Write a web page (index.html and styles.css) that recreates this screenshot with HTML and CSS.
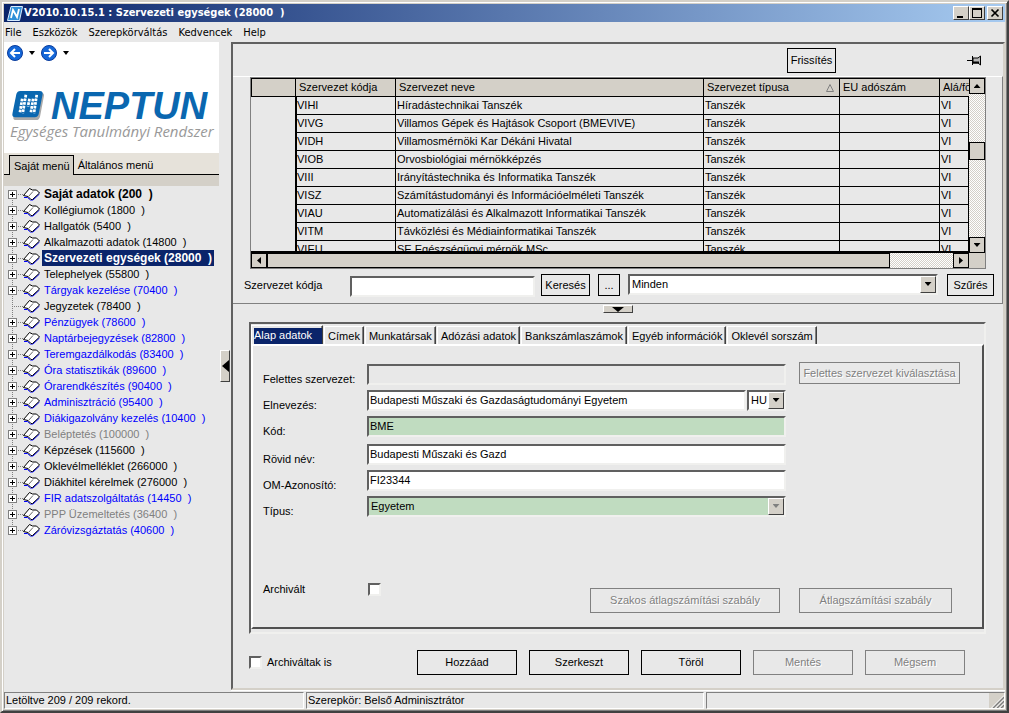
FILE: index.html
```html
<!DOCTYPE html>
<html lang="hu">
<head>
<meta charset="utf-8">
<title>V2010.10.15.1 : Szervezeti egységek (28000 )</title>
<link rel="stylesheet" href="styles.css">
</head>
<body>
<svg class="sprite" aria-hidden="true">
  <symbol id="book" viewBox="0 0 17 13">
    <path d="M1 9.500h3.500L7.500 12h2.500l6.500-6" fill="none" stroke="#0000ff"/>
    <path d="M.5 7.500L6.500 .5l3 1.500h4l3 3L9.500 11.500H8L5 8.500z" fill="#fff" stroke="#000"/>
    <path d="M10 3.500L5.500 8.500" fill="none" stroke="#666"/>
  </symbol>
  <symbol id="mark" viewBox="0 0 34 32">
    <path d="M9 3h22q3 0 2.500 3l-4 21q-1 4-4 4H5q-4 0-3-4L5 6q1-3 4-3z" fill="#aaa"/>
    <path d="M9 1h20q4 0 3 4l-4 20q-1 3-4 3H4q-4 0-3-4L5 4q1-3 4-3z" fill="#0a67b0"/>
    <g fill="none" stroke="#fff" stroke-width="2.800" stroke-dasharray="2.800 1">
      <path d="M11 9L8.500 24M14.800 5l-3.200 19M18.500 9l-1.500 8M22.300 9l-2.500 15M26 5l-2.800 19"/>
    </g>
  </symbol>
</svg>
<div class="window">
  <header class="titlebar">
    <svg class="app-icon" viewBox="0 0 16 15"><path d="M4 .5h11.500l-3 14H.5z" fill="#2f8fd8" stroke="#d8ecff"/><path d="M4 12L6 4l4 7 2-8" fill="none" stroke="#fff" stroke-width="1.800"/></svg>
    <h1>V2010.10.15.1 : Szervezeti egységek (28000  )</h1>
    <button aria-label="Kis méret"><svg viewBox="0 0 14 12"><path d="M3 9h6v2H3z"/></svg></button>
    <button aria-label="Teljes méret"><svg viewBox="0 0 14 12"><path d="M2 1h10v10H2zM3 3v7h8V3z" fill-rule="evenodd"/></svg></button>
    <button class="close" aria-label="Bezárás"><svg viewBox="0 0 14 12"><path d="M3.500 2.500l7 7m0-7l-7 7" stroke="#000" stroke-width="1.700"/></svg></button>
  </header>
  <nav class="menubar"><a href="#">File</a><a href="#">Eszközök</a><a href="#">Szerepkörváltás</a><a href="#">Kedvencek</a><a href="#">Help</a></nav>

  <div class="body">
    <aside class="side">
      <div class="brand">
        <div class="history">
          <button aria-label="Vissza"><svg viewBox="0 0 16 16"><circle cx="8" cy="8" r="7.500" fill="#1467d8" stroke="#0a3c9c"/><path d="M13 8H4m4-4L4 8l4 4" fill="none" stroke="#fff" stroke-width="2"/></svg></button>
          <i class="drop"></i>
          <button aria-label="Előre"><svg viewBox="0 0 16 16"><circle cx="8" cy="8" r="7.500" fill="#1467d8" stroke="#0a3c9c"/><path d="M3 8h9M8 4l4 4-4 4" fill="none" stroke="#fff" stroke-width="2"/></svg></button>
          <i class="drop"></i>
        </div>
        <div class="logo"><svg><use href="#mark"/></svg><strong>NEPTUN</strong></div>
        <p class="slogan">Egységes Tanulmányi Rendszer</p>
      </div>
      <div class="side-tabs"><button class="on">Saját menü</button><button>Általános menü</button></div>
      <ul class="tree">
        <li><button aria-label="Kibontás"></button><svg><use href="#book"/></svg><a href="#" class="bold">Saját adatok (200  )</a></li>
        <li><button aria-label="Kibontás"></button><svg><use href="#book"/></svg><a href="#">Kollégiumok (1800  )</a></li>
        <li><button aria-label="Kibontás"></button><svg><use href="#book"/></svg><a href="#">Hallgatók (5400  )</a></li>
        <li><button aria-label="Kibontás"></button><svg><use href="#book"/></svg><a href="#">Alkalmazotti adatok (14800  )</a></li>
        <li><button aria-label="Kibontás"></button><svg><use href="#book"/></svg><a href="#" class="bold selected">Szervezeti egységek (28000  )</a></li>
        <li><button aria-label="Kibontás"></button><svg><use href="#book"/></svg><a href="#">Telephelyek (55800  )</a></li>
        <li><button aria-label="Kibontás"></button><svg><use href="#book"/></svg><a href="#" class="blue">Tárgyak kezelése (70400  )</a></li>
        <li class="leaf"><svg><use href="#book"/></svg><a href="#">Jegyzetek (78400  )</a></li>
        <li><button aria-label="Kibontás"></button><svg><use href="#book"/></svg><a href="#" class="blue">Pénzügyek (78600  )</a></li>
        <li><button aria-label="Kibontás"></button><svg><use href="#book"/></svg><a href="#" class="blue">Naptárbejegyzések (82800  )</a></li>
        <li><button aria-label="Kibontás"></button><svg><use href="#book"/></svg><a href="#" class="blue">Teremgazdálkodás (83400  )</a></li>
        <li><button aria-label="Kibontás"></button><svg><use href="#book"/></svg><a href="#" class="blue">Óra statisztikák (89600  )</a></li>
        <li><button aria-label="Kibontás"></button><svg><use href="#book"/></svg><a href="#" class="blue">Órarendkészítés (90400  )</a></li>
        <li><button aria-label="Kibontás"></button><svg><use href="#book"/></svg><a href="#" class="blue">Adminisztráció (95400  )</a></li>
        <li><button aria-label="Kibontás"></button><svg><use href="#book"/></svg><a href="#" class="blue">Diákigazolvány kezelés (10400  )</a></li>
        <li><button aria-label="Kibontás"></button><svg><use href="#book"/></svg><a href="#" class="gray">Beléptetés (100000  )</a></li>
        <li><button aria-label="Kibontás"></button><svg><use href="#book"/></svg><a href="#">Képzések (115600  )</a></li>
        <li><button aria-label="Kibontás"></button><svg><use href="#book"/></svg><a href="#">Oklevélmelléklet (266000  )</a></li>
        <li><button aria-label="Kibontás"></button><svg><use href="#book"/></svg><a href="#">Diákhitel kérelmek (276000  )</a></li>
        <li><button aria-label="Kibontás"></button><svg><use href="#book"/></svg><a href="#" class="blue">FIR adatszolgáltatás (14450  )</a></li>
        <li><button aria-label="Kibontás"></button><svg><use href="#book"/></svg><a href="#" class="gray">PPP Üzemeltetés (36400  )</a></li>
        <li><button aria-label="Kibontás"></button><svg><use href="#book"/></svg><a href="#" class="blue">Záróvizsgáztatás (40600  )</a></li>
      </ul>
    </aside>
    <div class="split-v"><button aria-label="Menü elrejtése"><svg viewBox="0 0 7 12"><path d="M7 0v12L0 6z"/></svg></button></div>

    <main class="content">
      <div class="toolbar">
        <button class="btn">Frissítés</button>
        <button class="pin" aria-label="Rögzítés"><svg viewBox="0 0 15 11"><path d="M0 5.500h5" stroke="#000"/><path d="M5.500 1v9M6 3h5l2.500-2v9L11 8H6z" fill="#b8b8b8" stroke="#000"/><path d="M6 7.500h6" stroke="#000" stroke-width="2"/></svg></button>
      </div>
      <section class="upper">
        <div class="grid">
          <div class="viewport">
            <table>
              <colgroup><col class="c1"><col class="c2"><col class="c3"><col class="c4"><col class="c5"><col></colgroup>
              <thead><tr><th></th><th>Szervezet kódja</th><th>Szervezet neve</th><th><span class="sorted">Szervezet típusa <svg viewBox="0 0 8 8"><path d="M.5 7.500L4 .5l3.500 7z" fill="none" stroke="#808080"/></svg></span></th><th>EU adószám</th><th>Alá/fö</th></tr></thead>
              <tbody>
                <tr><td></td><td>VIHI</td><td>Híradástechnikai Tanszék</td><td>Tanszék</td><td></td><td>VI</td></tr>
                <tr><td></td><td>VIVG</td><td>Villamos Gépek és Hajtások Csoport (BMEVIVE)</td><td>Tanszék</td><td></td><td>VI</td></tr>
                <tr><td></td><td>VIDH</td><td>Villamosmérnöki Kar Dékáni Hivatal</td><td>Tanszék</td><td></td><td>VI</td></tr>
                <tr><td></td><td>VIOB</td><td>Orvosbiológiai mérnökképzés</td><td>Tanszék</td><td></td><td>VI</td></tr>
                <tr><td></td><td>VIII</td><td>Irányítástechnika és Informatika Tanszék</td><td>Tanszék</td><td></td><td>VI</td></tr>
                <tr><td></td><td>VISZ</td><td>Számítástudományi és Információelméleti Tanszék</td><td>Tanszék</td><td></td><td>VI</td></tr>
                <tr><td></td><td>VIAU</td><td>Automatizálási és Alkalmazott Informatikai Tanszék</td><td>Tanszék</td><td></td><td>VI</td></tr>
                <tr><td></td><td>VITM</td><td>Távközlési és Médiainformatikai Tanszék</td><td>Tanszék</td><td></td><td>VI</td></tr>
                <tr><td></td><td>VIEU</td><td>SE Egészségügyi mérnök MSc</td><td>Tanszék</td><td></td><td>VI</td></tr>
              </tbody>
            </table>
          </div>
          <div class="scroll vert"><button aria-label="Fel"><i class="up"></i></button><span class="gap-a"></span><span class="thumb"></span><span class="gap-b"></span><button aria-label="Le"><i class="down"></i></button></div>
          <div class="scroll horz"><button aria-label="Balra"><i class="left"></i></button><span class="thumb"></span><span class="gap"></span><button aria-label="Jobbra"><i class="right"></i></button></div>
          <div class="corner"></div>
        </div>
        <div class="search">
          <label for="code">Szervezet kódja</label>
          <input id="code" type="text">
          <button class="btn">Keresés</button>
          <button class="btn dots">...</button>
          <span class="combo"><select aria-label="Szűrő"><option>Minden</option></select><i class="arrow"></i></span>
          <button class="btn">Szűrés</button>
        </div>
      </section>
      <div class="split-h"><button aria-label="Lista elrejtése"><svg viewBox="0 0 12 5"><path d="M0 0h12L6 5z"/></svg></button></div>

      <section class="tabframe">
        <div class="tabs"><button class="on"><span>Alap adatok</span></button><button>Címek</button><button>Munkatársak</button><button>Adózási adatok</button><button>Bankszámlaszámok</button><button>Egyéb információk</button><button>Oklevél sorszám</button></div>
        <form class="page">
          <div class="fields">
            <label for="parent">Felettes szervezet:</label><input id="parent" class="off" readonly><button type="button" class="btn" disabled>Felettes szervezet kiválasztása</button>
            <label for="name">Elnevezés:</label>
            <div class="pair"><input id="name" value="Budapesti Műszaki és Gazdaságtudományi Egyetem"><span class="combo"><select aria-label="Nyelv"><option>HU</option></select><i class="arrow"></i></span></div>
            <label for="kod">Kód:</label><input id="kod" class="green" value="BME">
            <label for="short" class="after">Rövid név:</label><input id="short" class="after" value="Budapesti Műszaki és Gazd">
            <label for="om">OM-Azonosító:</label><input id="om" value="FI23344">
            <label for="type">Típus:</label><span class="combo green dim"><select id="type"><option>Egyetem</option></select><i class="arrow"></i></span>
          </div>
          <div class="extras">
            <label for="arch">Archivált</label><input id="arch" type="checkbox">
            <button type="button" class="btn rule-a" disabled>Szakos átlagszámítási szabály</button>
            <button type="button" class="btn rule-b" disabled>Átlagszámítási szabály</button>
          </div>
        </form>
      </section>
      <div class="actions">
        <input id="all" type="checkbox"><label for="all">Archiváltak is</label>
        <button class="btn">Hozzáad</button><button class="btn">Szerkeszt</button><button class="btn">Töröl</button><button class="btn" disabled>Mentés</button><button class="btn" disabled>Mégsem</button>
      </div>
    </main>
  </div>
  <footer class="status"><span>Letöltve 209 / 209 rekord.</span><span>Szerepkör: Belső Adminisztrátor</span><span class="last"><svg viewBox="0 0 15 15"><path d="M0 0h15v15H0z" fill="#d4d0c8"/><path d="M4 15L15 4M8 15l7-7M12 15l3-3" stroke="#808080" stroke-width="1.600"/><path d="M2.500 15L15 2.500M6.500 15L15 6.500M10.500 15l4.500-4.500" stroke="#fff"/></svg></span></footer>
</div>
</body>
</html>
```

FILE: styles.css
```css
* { box-sizing: border-box; }
body { margin: 0; font: 11px/13px "Liberation Sans", Arial, sans-serif; color: #000; }
button, input, select { font: inherit; color: inherit; margin: 0; padding: 0; border: 0; border-radius: 0; background: none; }
a { color: inherit; text-decoration: none; }
svg { display: block; }
.sprite { position: absolute; width: 0; height: 0; }

.window {
  height: 100vh; min-height: 640px; padding: 2px;
  display: grid; grid-template-rows: 18px 20px 1fr 19px;
  background: #e8e8e8;
  border: 2px solid; border-color: #d4d0c8 #404040 #404040 #d4d0c8;
  box-shadow: inset 1px 1px #fff, inset -1px -1px #808080, inset 2px 2px #d4d0c8, inset -2px -2px #d4d0c8;
}

/* title and menu */
.titlebar { display: flex; align-items: center; padding: 0 2px 0 3px; background: linear-gradient(90deg, #0a246a, #a6caf0); color: #fff; }
.app-icon { width: 16px; height: 15px; margin-right: 1px; }
.titlebar h1 { flex: 1; margin: 0; font: bold 11px/18px "DejaVu Sans Condensed", "DejaVu Sans", sans-serif; white-space: pre; }
.titlebar button { width: 16px; height: 14px; background: #d4d0c8; border: 1px solid; border-color: #fff #404040 #404040 #fff; }
.titlebar button svg { width: 14px; height: 12px; }
.titlebar .close { margin-left: 2px; }
.menubar { display: flex; gap: 11px; padding: 1px 0 0 1px; font: 11px/19px "DejaVu Sans Condensed", "DejaVu Sans", sans-serif; }

.body { display: grid; grid-template-columns: 215px 12px 1fr; min-height: 0; }

/* sidebar */
.side { display: flex; flex-direction: column; min-width: 0; }
.brand { height: 111px; padding: 3px 0 0 3px; background: #fff; }
.history { display: flex; align-items: center; height: 16px; }
.history button, .history svg { width: 16px; height: 16px; }
.drop { width: 6px; height: 4px; margin: 0 6px; background: #000; clip-path: polygon(0 0, 100% 0, 50% 100%); }
.logo { display: flex; gap: 5px; margin: 29px 0 0 3px; height: 32px; }
.logo svg { width: 36px; height: 31px; }
.logo strong { font: italic bold 38px/32px "Liberation Sans", Arial, sans-serif; color: #0a67b0; }
.slogan { margin: 0 0 0 3px; font: italic 15px/18px "Open Sans", sans-serif; color: #999; white-space: nowrap; }
.side-tabs { display: flex; align-items: flex-end; height: 22px; padding: 0 0 0 5px; background: #e6e2da; border-bottom: 1px solid #000; }
.side-tabs button { height: 19px; padding: 2px 3px 0 4px; }
.side-tabs .on { height: 20px; padding-top: 1px; margin-bottom: -1px; background: #d4d0c8; border: 1px solid #000; border-bottom: 0; }
.tree { list-style: none; margin: 0; padding: 0; border-top: 11px solid #d4d0c8; }
.tree li { display: flex; align-items: center; height: 16px; padding-left: 4px; background: repeating-linear-gradient(#808080 0 1px, transparent 1px 2px) 8px 0 / 1px 16px no-repeat, repeating-linear-gradient(90deg, #808080 0 1px, transparent 1px 2px) 8px 8px / 11px 1px no-repeat; }
.tree li:first-child { background-position: 8px 8px, 8px 8px; }
.tree li:last-child { background-size: 1px 8px, 11px 1px; }
.tree button { width: 9px; height: 9px; margin-right: 6px; border: 1px solid #808080; background: linear-gradient(#000, #000) 1px 3px / 5px 1px no-repeat, linear-gradient(#000, #000) 3px 1px / 1px 5px no-repeat, #fff; }
.tree .leaf { padding-left: 19px; }
.tree svg { width: 17px; height: 13px; margin-right: 2px; }
.tree a { padding: 0 2px; line-height: 16px; white-space: pre; }
.tree .bold { font-weight: bold; font-size: 12px; }
.tree .selected { background: #0a246a; color: #fff; }
.tree .blue { color: #00f; }
.tree .gray { color: #808080; }

.split-v { display: flex; align-items: center; padding-left: 1px; }
.split-v button, .split-h button { display: flex; align-items: center; background: #d4d0c8; border: 1px solid; border-color: #fff #404040 #404040 #fff; }
.split-v button { width: 10px; height: 32px; justify-content: flex-end; }
.split-v svg { width: 7px; height: 12px; }
.split-h { display: flex; justify-content: center; height: 18px; padding-top: 1px; }
.split-h button { width: 30px; height: 8px; justify-content: center; }
.split-h svg { width: 12px; height: 5px; }

/* right side */
.content { display: flex; flex-direction: column; min-width: 0; border: 2px solid; border-color: #606060 #d4d0c8 #d4d0c8 #606060; box-shadow: 0 1px #fff; }
.btn { height: 25px; border: 1px solid #000; text-align: center; white-space: nowrap; }
.btn:disabled { border-color: #808080; color: #808080; text-shadow: 1px 1px #fff; }
.toolbar { display: flex; align-items: center; justify-content: flex-end; gap: 131px; height: 32px; padding-right: 21px; }
.toolbar .btn { width: 49px; }
.pin svg { width: 15px; height: 11px; }
.upper { border: 1px solid; border-color: #fff #808080 #808080 transparent; border-left: 0; padding: 0 16px 0 17px; }

.grid { display: grid; grid-template-columns: 1fr 16px; grid-template-rows: 175px 15px; border: 1px solid #808080; }
.viewport { overflow: hidden; border: 1px solid #000; border-width: 1px 0 2px; }
table { width: 100%; table-layout: fixed; border-collapse: separate; border-spacing: 0; }
.c1 { width: 45px; } .c2 { width: 100px; } .c3 { width: 308px; } .c4 { width: 136px; } .c5 { width: 100px; }
th, td { height: 18px; padding: 0 0 0 1px; line-height: 17px; font-weight: normal; text-align: left; white-space: nowrap; overflow: hidden; border: 0 solid #000; border-width: 0 1px 1px 0; }
th { padding-left: 3px; background: #d4d0c8; }
th:first-child { border-left-width: 1px; }
th:last-child { border-right: 0; }
td:first-child { border-bottom: 0; }
td:nth-child(2) { border-left-width: 1px; padding-left: 0; }
.sorted { display: flex; align-items: center; justify-content: space-between; padding-right: 5px; }
.sorted svg { width: 8px; height: 8px; }
.scroll { display: flex; background: repeating-conic-gradient(#d4d0c8 0 25%, #fff 0 50%) 0 0 / 2px 2px; }
.scroll button, .thumb { display: grid; place-items: center; flex: none; background: #d4d0c8; border: 1px solid #000; }
.scroll button { width: 16px; height: 16px; }
.horz button { height: 15px; }
.vert { flex-direction: column; }
.vert .gap-a { flex: 48; } .vert .thumb { height: 18px; } .vert .gap-b { flex: 77; }
.horz .thumb { flex: 623; } .horz .gap { flex: 63; }
.corner { background: #d4d0c8; }
.scroll i { background: #000; }
.up, .down { width: 7px; height: 4px; }
.left, .right { width: 4px; height: 7px; }
.up { clip-path: polygon(50% 0, 100% 100%, 0 100%); }
.down { clip-path: polygon(0 0, 100% 0, 50% 100%); }
.left { clip-path: polygon(100% 0, 100% 100%, 0 50%); }
.right { clip-path: polygon(0 0, 100% 50%, 0 100%); }

input:not([type=checkbox]), .combo { height: 21px; min-width: 0; background: #fff; border: 2px solid; border-color: #606060 #f0f0ee #f0f0ee #606060; }
input:not([type=checkbox]) { padding: 0 1px 2px; }
.combo { position: relative; display: flex; }
.combo select { appearance: none; flex: 1; min-width: 0; padding: 0 2px; }
.arrow { position: absolute; top: 0; right: 0; bottom: 0; width: 16px; background: #d4d0c8; border: 1px solid; border-color: #fff #404040 #404040 #fff; pointer-events: none; }
.arrow::after { content: ""; display: block; width: 7px; height: 4px; margin: 5px auto 0; background: #000; clip-path: polygon(0 0, 100% 0, 50% 100%); }
.dim .arrow::after { background: #808080; }
input[type=checkbox] { appearance: none; width: 13px; height: 13px; background: #fff; border: 2px solid; border-color: #606060 #f0f0ee #f0f0ee #606060; }
input[type=checkbox]:checked { background: #000; }
input.off { background: #e8e8e8; }
input.green, .combo.green { background: #c0dcc0; }

.search { display: flex; align-items: flex-start; height: 34px; padding-top: 5px; margin: 0 -8px 0 -6px; }
.search label { width: 106px; padding-top: 5px; }
.search input { width: 185px; margin: 2px 6px 0 0; }
.search .btn { width: 49px; height: 22px; }
.search .dots { width: 22px; margin: 0 8px; }
.search .combo { flex: 1; margin-right: 9px; }
.search .btn:last-child { width: 47px; }

/* details */
.tabframe { flex: 1; display: flex; flex-direction: column; margin: 0 17px 0 16px; padding-bottom: 3px; border: 2px solid; border-color: #606060 #f0f0ee #f0f0ee #606060; }
.tabs { display: flex; align-items: flex-end; height: 20px; padding: 0 2px 0 0; }
.tabs button { height: 18px; padding: 1px 3px 0; margin-right: 1px; border: 1px solid; border-color: #fff #404040 transparent #fff; box-shadow: inset -1px 0 #808080; border-bottom: 0; white-space: nowrap; }
.tabs .on { height: 20px; padding: 2px 0 0 2px; margin-bottom: -1px; border-color: #fff #404040 #fff #fff; }
.tabs .on span { display: block; height: 18px; padding: 0 10px 0 0; line-height: 15px; background: #0a246a; color: #fff; }
.page { flex: 1; display: flex; flex-direction: column; justify-content: space-between; padding: 18px 22px 14px 10px; border: 2px solid; border-color: #fff #505050 #505050 #fff; }
.fields { display: grid; grid-template-columns: 104px 1fr 13px 161px; row-gap: 5px; }
.fields > * { grid-column: 2; }
.fields > label { grid-column: 1; padding-top: 9px; height: 21px; }
.fields > .btn { grid-column: 4; height: 22px; margin: -2px 0 0; }
.fields > .after { margin-top: 2px; }
.pair { display: flex; gap: 1px; }
.pair input { flex: 1; }
.pair .combo { width: 39px; }
.extras { display: flex; align-items: flex-start; padding-right: 8px; }
.extras label { width: 105px; }
.extras .btn { margin-top: 5px; }
.rule-a { width: 190px; margin-left: auto; }
.rule-b { width: 153px; margin-left: 19px; }
.actions { display: flex; align-items: center; height: 54px; padding: 3px 38px 0 16px; gap: 12px; }
.actions label { margin: 0 auto 0 -7px; }
.actions .btn { width: 100px; }

.status { display: grid; grid-template-columns: 300px 398px 1fr; gap: 2px; padding-top: 2px; }
.status span { display: flex; align-items: center; padding-left: 1px; border: 1px solid; border-color: #808080 #fff #fff #808080; }
.status .last { justify-content: flex-end; }
.status svg { width: 15px; height: 15px; }
```
